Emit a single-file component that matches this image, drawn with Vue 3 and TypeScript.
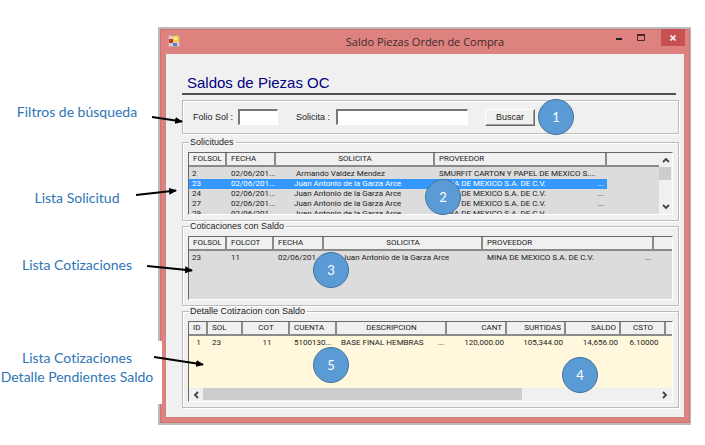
<script setup lang="ts">
import { ref } from 'vue'

interface Column {
  label: string
  width?: number
  kind?: string
}
interface Solicitud {
  folio: string
  fecha: string
  solicita: string
  proveedor: string
  more: boolean
}

const folio = ref('')
const solicita = ref('')
const selected = ref(1)

const juan = 'Juan Antonio de la Garza Arce'
const mina = 'MINA DE MEXICO S.A. DE C.V.'

const solicitudCols: Column[] = [
  { label: 'FOLSOL', width: 38 },
  { label: 'FECHA', width: 49 },
  { label: 'SOLICITA', width: 159, kind: 'center' },
  { label: 'PROVEEDOR', width: 172 },
  { label: '' },
]
const solicitudes: Solicitud[] = [
  { folio: '2', fecha: '02/06/201...', solicita: '\u00a0' + 'Armando Valdez Mendez', proveedor: 'SMURFIT CARTON Y PAPEL DE MEXICO S....', more: false },
  { folio: '23', fecha: '02/06/201...', solicita: juan, proveedor: mina, more: true },
  { folio: '24', fecha: '02/06/201...', solicita: juan, proveedor: mina, more: true },
  { folio: '27', fecha: '02/06/201...', solicita: juan, proveedor: mina, more: true },
  { folio: '29', fecha: '02/06/201...', solicita: juan, proveedor: mina, more: false },
]
const cotizacionCols: Column[] = [
  { label: 'FOLSOL', width: 38 },
  { label: 'FOLCOT', width: 47 },
  { label: 'FECHA', width: 50 },
  { label: 'SOLICITA', width: 159, kind: 'center' },
  { label: 'PROVEEDOR', width: 171 },
  { label: '' },
]
const detalleCols: Column[] = [
  { label: 'ID', width: 19 },
  { label: 'SOL', width: 35 },
  { label: 'COT', width: 47, kind: 'center' },
  { label: 'CUENTA', width: 47 },
  { label: 'DESCRIPCION', width: 110, kind: 'center' },
  { label: 'CANT', width: 60, kind: 'right' },
  { label: 'SURTIDAS', width: 59, kind: 'right' },
  { label: 'SALDO', width: 55, kind: 'right' },
  { label: 'CSTO', width: 45, kind: 'center' },
  { label: '' },
]
</script>

<template>
  <main class="page">
    <aside class="notes">
      <p class="note">Filtros de búsqueda</p>
      <p class="note">Lista Solicitud</p>
      <p class="note">Lista Cotizaciones</p>
      <p class="note last">Lista Cotizaciones<br>Detalle Pendientes Saldo</p>
    </aside>

    <section class="window">
      <header class="titlebar">
        <svg class="app-icon" width="12" height="12" viewBox="0 0 12 12" aria-hidden="true">
          <rect x="0.5" y="0.5" width="11" height="11" fill="#e6c9c6" stroke="#c8a19e" />
          <rect x="1" y="4" width="4" height="4" fill="#c5362c" />
          <rect x="5" y="1" width="6" height="6" fill="#f6cb3b" />
          <rect x="6" y="2" width="3" height="3" fill="#fff09a" />
          <rect x="5" y="8" width="4" height="3" fill="#4b80d6" />
        </svg>
        <span class="caption">Saldo Piezas Orden de Compra</span>
        <div class="controls">
          <button type="button" aria-label="Minimizar"><svg width="10" height="10" viewBox="0 0 10 10"><path d="M2 6h6" stroke="#222" stroke-width="2" /></svg></button>
          <button type="button" aria-label="Maximizar"><svg width="10" height="10" viewBox="0 0 10 10"><path d="M1.5 2v5.5h7V2" fill="none" stroke="#4a2626" stroke-width="1" /><path d="M1 2h8" stroke="#4a2626" stroke-width="2" /></svg></button>
          <button type="button" class="close" aria-label="Cerrar"><svg width="8" height="8" viewBox="0 0 8 8"><path d="M1.500 1.500l5 5M6.500 1.500l-5 5" stroke="#fff" stroke-width="1.600" /></svg></button>
        </div>
      </header>

      <div class="client">
        <h1>Saldos de Piezas OC</h1>
        <form class="filters" @submit.prevent>
          <label for="folio">Folio Sol :</label>
          <input id="folio" v-model="folio" class="short" type="text">
          <label for="solicita">Solicita :</label>
          <input id="solicita" v-model="solicita" class="long" type="text">
          <button type="submit">Buscar</button>
        </form>

        <fieldset class="first">
          <legend>Solicitudes</legend>
          <div class="list with-bar">
            <div class="viewport">
              <table>
                <colgroup><col v-for="(c, i) in solicitudCols" :key="i" :style="{ width: c.width ? c.width + 'px' : 'auto' }"></colgroup>
                <thead><tr><th v-for="(c, i) in solicitudCols" :key="i" :class="c.kind">{{ c.label }}</th></tr></thead>
                <tbody>
                  <tr v-for="(r, i) in solicitudes" :key="i" :class="{ selected: i === selected }" @click="selected = i">
                    <td>{{ r.folio }}</td>
                    <td>{{ r.fecha }}</td>
                    <td class="person">{{ r.solicita }}</td>
                    <td><span v-if="r.more" class="more">...</span>{{ r.proveedor }}</td>
                    <td class="rest"></td>
                  </tr>
                </tbody>
              </table>
            </div>
            <div class="vbar">
              <button type="button" aria-label="Subir"><svg width="8" height="6" viewBox="0 0 8 6"><path d="M1 5l3-3 3 3" /></svg></button>
              <span class="thumb"></span>
              <button type="button" aria-label="Bajar"><svg width="8" height="6" viewBox="0 0 8 6"><path d="M1 1l3 3 3-3" /></svg></button>
            </div>
          </div>
        </fieldset>

        <fieldset>
          <legend>Coticaciones con Saldo</legend>
          <div class="list">
            <table>
              <colgroup><col v-for="(c, i) in cotizacionCols" :key="i" :style="{ width: c.width ? c.width + 'px' : 'auto' }"></colgroup>
              <thead><tr><th v-for="(c, i) in cotizacionCols" :key="i" :class="c.kind">{{ c.label }}</th></tr></thead>
              <tbody>
                <tr>
                  <td>23</td>
                  <td>11</td>
                  <td>02/06/201...</td>
                  <td class="person">{{ juan }}</td>
                  <td><span class="more">...</span>{{ mina }}</td>
                  <td></td>
                </tr>
              </tbody>
            </table>
          </div>
        </fieldset>

        <fieldset>
          <legend>Detalle Cotizacion con Saldo</legend>
          <div class="list detail">
            <table>
              <colgroup><col v-for="(c, i) in detalleCols" :key="i" :style="{ width: c.width ? c.width + 'px' : 'auto' }"></colgroup>
              <thead><tr><th v-for="(c, i) in detalleCols" :key="i" :class="c.kind">{{ c.label }}</th></tr></thead>
              <tbody>
                <tr>
                  <td class="center">1</td>
                  <td>23</td>
                  <td class="center">11</td>
                  <td>5100130...</td>
                  <td><span class="more">...</span>BASE FINAL HEMBRAS</td>
                  <td class="right">120,000.00</td>
                  <td class="right">105,344.00</td>
                  <td class="right">14,656.00</td>
                  <td class="center">6.10000</td>
                  <td></td>
                </tr>
              </tbody>
            </table>
            <div class="hbar">
              <button type="button" aria-label="Izquierda"><svg width="6" height="8" viewBox="0 0 6 8"><path d="M5 1L2 4l3 3" /></svg></button>
              <div class="track"><span class="thumb"></span></div>
              <button type="button" aria-label="Derecha"><svg width="6" height="8" viewBox="0 0 6 8"><path d="M1 1l3 3-3 3" /></svg></button>
            </div>
          </div>
        </fieldset>
      </div>
    </section>

    <svg class="arrows" width="210" height="400" viewBox="0 0 210 400" aria-hidden="true">
      <defs>
        <marker id="head" markerWidth="8" markerHeight="8" refX="7" refY="4" orient="auto" markerUnits="userSpaceOnUse">
          <path d="M0 0.5L8 4L0 7.5z" />
        </marker>
      </defs>
      <g stroke="#000" stroke-width="2">
        <path d="M152 117L182 121.500" marker-end="url(#head)" />
        <path d="M136 195L176 190.500" marker-end="url(#head)" />
        <path d="M147 266L192 270.500" marker-end="url(#head)" />
        <path d="M154 357L203 364.500" marker-end="url(#head)" />
      </g>
    </svg>
    <span class="badge b1">1</span>
    <span class="badge b2">2</span>
    <span class="badge b3">3</span>
    <span class="badge b4">4</span>
    <span class="badge b5">5</span>
  </main>
</template>

<style>
body {
  background: #fff;
}
</style>

<style scoped>
* {
  box-sizing: border-box;
}
.page {
  position: relative;
  display: grid;
  grid-template-columns: 158px 1fr;
  padding: 27px 14px 18px 0;
  font-family: "Liberation Sans", Arial, sans-serif;
  color: #222;
}
button {
  padding: 0;
  border: 0;
  background: none;
  font: inherit;
  color: inherit;
}
.notes {
  z-index: 1;
  padding-top: 75px;
  font: 14px/19px Lato, "Open Sans", sans-serif;
  font-variant-ligatures: none;
  color: #2e75b6;
  text-align: center;
  white-space: nowrap;
}
.note {
  margin: 0 4px 67px 0;
}
.note:nth-child(2) {
  margin-bottom: 48px;
}
.note:nth-child(3) {
  margin-bottom: 67px;
}
.note.last {
  margin: 0 -4px 0 0;
  padding: 7px 8px 18px 0;
  background: #fff;
}
.window {
  border: 2px solid #bdbab8;
  border-right-width: 1px;
  padding: 0 5px 5px;
  background: #de8280;
  box-shadow: inset 0 0 0 1px #cf7371;
}
.titlebar {
  display: grid;
  grid-template-columns: 72px 1fr 75px;
  height: 25px;
  padding-left: 3px;
}
.app-icon {
  margin-top: 6px;
}
.caption {
  font: 11px/26px "Open Sans", sans-serif;
  text-align: center;
  color: #3c2a2a;
  white-space: nowrap;
}
.controls {
  display: flex;
  justify-content: flex-end;
  align-items: flex-start;
  gap: 12px;
}
.controls button {
  display: flex;
  justify-content: center;
  align-items: center;
  height: 18px;
}
.controls .close {
  flex: none;
  width: 24px;
  height: 17px;
  margin-left: 3px;
  background: #c75050;
}
.client {
  padding: 19px 5px 9px 16px;
  border: 1px solid #c98583;
  border-top: 0;
  background: #f0f0f0;
}
h1 {
  margin: 0 3px 5px 0;
  padding-left: 5px;
  border-bottom: 2px solid #55504f;
  font: 15px/20px "Liberation Sans", Arial, sans-serif;
  color: #000080;
}
.filters,
fieldset {
  border: 1px solid #bcbcbc;
  box-shadow: 1px 1px #fff, inset 1px 1px #fff;
}
.filters {
  display: flex;
  align-items: center;
  height: 34px;
  padding-left: 10px;
  font-size: 9px;
}
.filters input {
  height: 16px;
  padding: 0 2px;
  border: 1px solid;
  border-color: #777 #fff #fff #777;
  border-top-width: 2px;
  border-left-width: 2px;
  background: #fff;
  font: inherit;
}
.filters .short {
  width: 40px;
  margin: 0 18px 0 5px;
}
.filters .long {
  width: 132px;
  margin: 0 17px 0 6px;
}
.filters button {
  width: 50px;
  height: 17px;
  border: 1px solid;
  border-color: #fff #696969 #696969 #fff;
  box-shadow: inset -1px -1px #a0a0a0;
}
fieldset {
  min-width: 0;
  margin: 0;
  padding: 5px;
}
fieldset.first {
  margin-top: 3px;
}
legend {
  margin-left: 1px;
  padding: 0 2px 0 1px;
  font-size: 9px;
  line-height: 10px;
}
.list {
  height: 63px;
  overflow: hidden;
  border: 1px solid;
  border-color: #696969 #fff #fff #696969;
  background: #dcdcdc;
  font-family: Roboto, "Liberation Sans", sans-serif;
  font-size: 8px;
}
fieldset:nth-of-type(2) .list {
  height: 64px;
}
.with-bar {
  display: flex;
}
.viewport {
  flex: 1;
  overflow: hidden;
}
fieldset .detail {
  display: flex;
  flex-direction: column;
  justify-content: space-between;
  height: 81px;
  background: #fff8dc;
}
table {
  width: 100%;
  table-layout: fixed;
  border-collapse: separate;
  border-spacing: 0;
}
th,
td {
  overflow: hidden;
  padding: 0 3px 0 4px;
  text-align: left;
  font-weight: normal;
  white-space: nowrap;
}
th {
  height: 14px;
  border-right: 2px solid #8a8a8a;
  border-bottom: 2px solid #8a8a8a;
  background: #f0f0f0;
  line-height: 12px;
}
th:last-child {
  border-right: 0;
}
td {
  height: 10px;
  line-height: 10px;
}
tbody::before {
  content: "";
  display: block;
  height: 2px;
}
td:first-child {
  padding-left: 3px;
}
td.person {
  padding-left: 18px;
}
.center {
  text-align: center;
}
.right {
  text-align: right;
}
.more {
  float: right;
}
.selected td:not(.rest) {
  background: #3399ff;
  color: #fff;
}
.vbar {
  display: flex;
  flex-direction: column;
  width: 13px;
  background: #f0f0f0;
}
.vbar button,
.hbar button {
  display: flex;
  justify-content: center;
  align-items: center;
  width: 14px;
  height: 14px;
}
.vbar .thumb {
  width: 12px;
  height: 13px;
  margin-bottom: auto;
  background: #cdcdcd;
}
.hbar {
  display: flex;
  height: 13px;
  background: #f0f0f0;
}
.hbar button {
  flex: none;
}
.track {
  flex: 1;
}
.hbar .thumb {
  display: block;
  width: 70%;
  height: 12px;
  background: #cdcdcd;
}
.vbar path,
.hbar path {
  fill: none;
  stroke: #444;
  stroke-width: 1.8;
}
.arrows {
  position: absolute;
  top: 0;
  left: 0;
  z-index: 2;
  pointer-events: none;
}
.badge {
  position: absolute;
  z-index: 2;
  width: 36px;
  height: 36px;
  border: 1px solid #41719c;
  border-radius: 50%;
  background: #5b9bd5;
  color: #fff;
  font: 13px/35px Lato, sans-serif;
  text-align: center;
}
.b1 {
  top: 99px;
  left: 538px;
}
.b2 {
  top: 179px;
  left: 425px;
}
.b3 {
  top: 252px;
  left: 313px;
}
.b4 {
  top: 357px;
  left: 562px;
}
.b5 {
  top: 347px;
  left: 313px;
}
</style>
